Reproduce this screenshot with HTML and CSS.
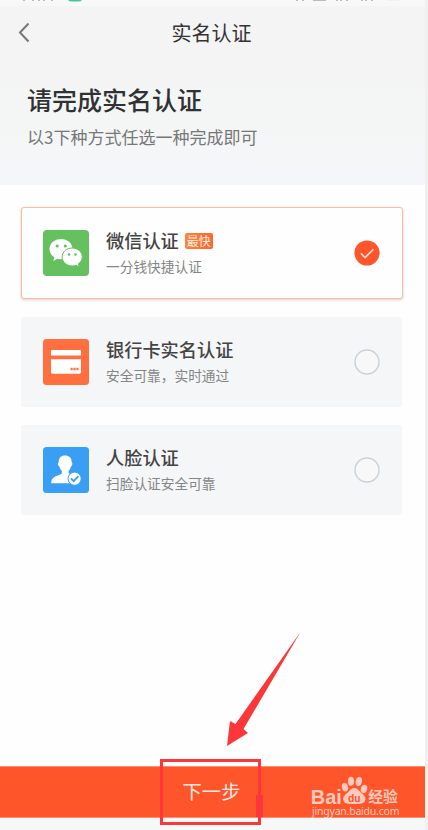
FILE: index.html
```html
<!DOCTYPE html>
<html lang="zh-CN">
<head>
<meta charset="utf-8">
<title>实名认证</title>
<link rel="stylesheet" href="styles.css">
</head>
<body>
<main class="screen">
  <header class="top">
    <svg class="status" width="425" height="6" viewBox="0 0 425 6" aria-hidden="true">
      <path d="M23 0h2M32 0h2M38 0h2M43 0h2M51 0h2" stroke="#bbb" stroke-width="2"/>
      <path d="M68 0h14q-1 1.500-4 1.500h-6q-3 0-4-1.500z" fill="#45c79b"/>
      <path d="M296 0h2M302 0h2M313 0h13M336 0h2M340 0h2M346 0h2M361 0h2M365 0h2M371 0h2" stroke="#bbb" stroke-width="2"/>
      <path d="M387 0h13" stroke="#e9e9e9" stroke-width="1"/>
    </svg>
    <nav class="nav">
      <svg class="back" width="12" height="20" viewBox="0 0 12 20"><path d="M10.500 .5L2 9.500l8.500 9" fill="none" stroke="#777" stroke-width="2"/></svg>
      <h1>实名认证</h1>
    </nav>
    <section class="intro">
      <h2>请完成实名认证</h2>
      <p>以3下种方式任选一种完成即可</p>
    </section>
  </header>
  <section class="options">
    <article class="card selected">
      <svg class="icon" viewBox="0 0 46 46">
        <rect width="46" height="46" rx="4" fill="#65c15e"/>
        <path d="M18 9C11.700 9 6.500 13.300 6.500 19c0 3.500 1.900 6.400 4.800 8.200L10.300 31l4.100-2.300c1.200.4 2.400.5 3.600.5 6.300 0 11.500-4.300 11.500-10.100S24.300 9 18 9z" fill="#fff"/>
        <path d="M29.200 18c-5.600 0-10.100 4-10.100 9s4.500 9 10.100 9c1.300 0 2.600-.2 3.800-.6l3.200 1.500-.8-3.100c2.400-1.600 3.900-4.100 3.900-6.800 0-5-4.500-9-10.100-9z" fill="#fff" stroke="#65c15e"/>
        <g fill="#65c15e"><circle cx="14.200" cy="16" r="1.600"/><circle cx="22.300" cy="16" r="1.600"/><circle cx="26" cy="24.500" r="1.300"/><circle cx="32.500" cy="24.500" r="1.300"/></g>
      </svg>
      <div class="copy"><h3>微信认证<span class="badge">最快</span></h3><p>一分钱快捷认证</p></div>
      <svg class="radio" viewBox="0 0 26 26"><circle cx="13" cy="13" r="12.600" fill="#ff552b"/><path d="M6.800 13.200l4.300 4.300 8.400-8.300" fill="none" stroke="#ffe5de" stroke-width="1.600"/></svg>
    </article>
    <article class="card">
      <svg class="icon" viewBox="0 0 46 46">
        <rect width="46" height="46" rx="3.500" fill="#ff6f3f"/>
        <path d="M9 11h28q1 0 1 1v4.500H8V12q0-1 1-1zM8 20.300h30v13q0 1.400-1.400 1.400H9.400Q8 34.700 8 33.300z" fill="#fff"/>
        <path d="M27.500 30h8" stroke="#ff6f3f" stroke-width="2.400" stroke-dasharray="2.200 .7"/>
      </svg>
      <div class="copy"><h3>银行卡实名认证</h3><p>安全可靠，实时通过</p></div>
      <svg class="radio" viewBox="0 0 26 26"><circle cx="13" cy="13" r="12" fill="#f8f8f8" stroke="#cbd0d7" stroke-width="1.400"/></svg>
    </article>
    <article class="card">
      <svg class="icon" viewBox="0 0 46 46">
        <rect width="46" height="46" rx="3.500" fill="#389ff4"/>
        <path d="M22 8.500c-4 0-6.500 2.700-6.300 6.700-1.300.5-.8 3.600.7 4.200.5 2 1.300 3.400 2.400 4.300v2.500c-1.300 2.500-10.200 2.300-10.500 8.500v1.600H30V27.900c-2-.6-4-1.100-4.400-2v-2.200c1.200-1 2-2.500 2.400-4.300 1.500-.7 1.900-3.700.7-4.200.2-4-2.700-6.700-6.700-6.700z" fill="#fff"/>
        <circle cx="31.600" cy="31.700" r="6.600" fill="#fff" stroke="#389ff4"/>
        <path d="M27.900 31.400l2.800 2.700 4.700-4.900" fill="none" stroke="#389ff4" stroke-width="1.900"/>
      </svg>
      <div class="copy"><h3>人脸认证</h3><p>扫脸认证安全可靠</p></div>
      <svg class="radio" viewBox="0 0 26 26"><circle cx="13" cy="13" r="12" fill="#f8f8f8" stroke="#cbd0d7" stroke-width="1.400"/></svg>
    </article>
  </section>
  <button class="next">下一步</button>
  <svg class="notes" width="428" height="830" viewBox="0 0 428 830">
    <path d="M300.500 632L243.500 729l4.500 4-21 13 3-25 5.500 3z" fill="#fc3739"/>
    <rect x="161.500" y="760.500" width="98" height="63" fill="none" stroke="#fc3739" stroke-width="3"/>
    <path d="M256 795h7v22h-7z" fill="#fc3739"/>
    <g fill="#ffcabd" class="brand">
      <text x="310.800" y="803.500" font-size="20" font-weight="700" textLength="31" lengthAdjust="spacingAndGlyphs">Bai</text>
      <ellipse cx="345" cy="787.200" rx="3.100" ry="4.300" transform="rotate(-12 345 787.200)"/>
      <ellipse cx="351" cy="781.200" rx="3.100" ry="4.500"/>
      <ellipse cx="358.800" cy="781.500" rx="3.100" ry="4.500" transform="rotate(12 358.800 781.500)"/>
      <ellipse cx="364" cy="789" rx="3.100" ry="4.300" transform="rotate(18 364 789)"/>
      <path d="M354.300 788c-3.800 0-4.600 3.200-7.800 5.600-3.300 2.500-4 5-2.900 7.500 1.300 3.100 5.300 3 10.700 3s9.400.1 10.700-3c1.100-2.500.4-5-2.900-7.500-3.200-2.400-4-5.600-7.800-5.600z"/>
      <text x="348" y="801.500" font-size="10.500" font-weight="700" fill="#ff552b" textLength="12.500" lengthAdjust="spacingAndGlyphs">du</text>
      <text x="368.300" y="802.300" font-size="14.800" font-weight="700" class="cn">经验</text>
      <text x="312" y="815" font-size="10.500" class="url" textLength="87.500">jingyan.baidu.com</text>
    </g>
  </svg>
</main>
</body>
</html>
```
FILE: styles.css
```css
* { box-sizing: border-box; }
body { margin: 0; background: #f6f7f7; font-family: "Noto Sans CJK SC", sans-serif; }
h1, h2, h3, p { margin: 0; font-weight: 400; white-space: nowrap; }
.screen { position: relative; width: 428px; height: 830px; display: flex; flex-direction: column; border-right: 3px solid #f0f0f0; overflow: hidden; }
.top { height: 185px; background: linear-gradient(#f4f4f4 0, #f4f4f4 75px, #f4f6f6 130px, #f4f6f9 185px); }
.status { display: block; background: #f8f8f8; }
.nav { height: 53px; display: grid; grid-template-columns: 30px 1fr 32px; align-items: center; }
.back { margin-left: 18px; }
.nav h1 { text-align: center; font-size: 20px; line-height: 30px; color: #333; }
.intro { padding: 22px 27px 0; }
.intro h2 { font-size: 25px; line-height: 36px; font-weight: 500; color: #303132; }
.intro p { margin-top: 7px; font-size: 17px; line-height: 26px; color: #777; }
.options { flex: 1; display: flex; flex-direction: column; gap: 17.500px; padding: 22px 23px 0 21px; background: #fefefe; }
.card { height: 90.500px; display: flex; align-items: center; padding: 0 22px; background: #f4f6f8; border-radius: 3px; }
.selected { height: 92px; width: 382px; padding: 0 22px 0 21px; background: #fefefe; border: 1px solid #ffb9a6; box-shadow: 0 1px 3px #d5cfd2; }
.icon { width: 46px; height: 46px; flex: none; }
.copy { flex: 1; margin-left: 17px; padding-bottom: 4px; }
.copy h3 { display: flex; align-items: center; font-size: 18.200px; line-height: 28px; font-weight: 500; color: #444; }
.copy p { font-size: 13.700px; line-height: 20px; margin-top: 2px; color: #858585; }
.badge { margin: 2px 0 0 6px; width: 28px; height: 16px; border-radius: 2px; background: linear-gradient(90deg, #ff8438, #ff6630); color: #fff0e6; font-size: 12px; line-height: 15px; font-weight: 400; text-align: center; }
.radio { width: 26px; height: 26px; flex: none; }
.next { height: 52px; margin: 0 0 12px; padding: 0 2px 2px 0; border: 0; border-top: 1px solid #ff8d70; border-bottom: 1px solid #ff8d70; background: #ff552b; color: #ffe9e2; font: 400 19.300px/48px "Noto Sans CJK SC", sans-serif; }
.notes { position: absolute; left: 0; top: 0; pointer-events: none; }
.brand { font-family: "Liberation Sans", sans-serif; }
.cn { font-family: "Noto Sans CJK SC", sans-serif; }
.url { font-family: "Noto Sans", sans-serif; }
```
